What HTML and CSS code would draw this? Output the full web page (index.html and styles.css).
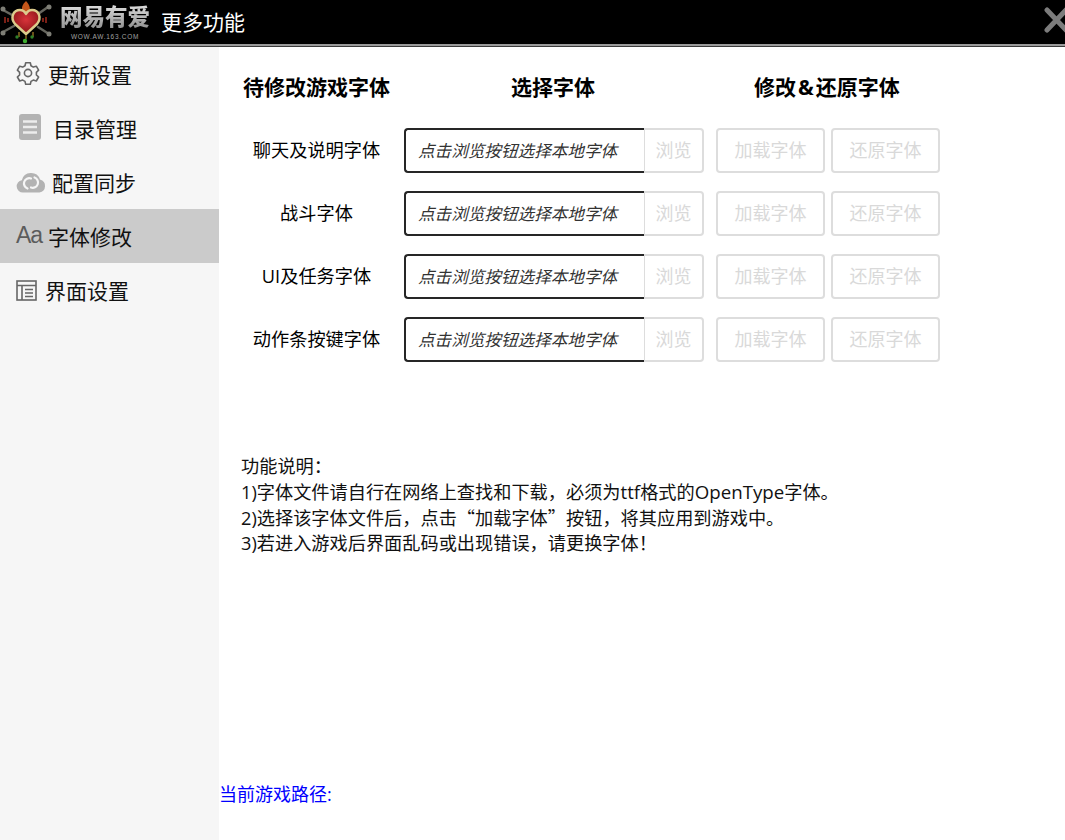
FILE: index.html
```html
<!DOCTYPE html>
<html lang="zh">
<head>
<meta charset="utf-8">
<title>更多功能</title>
<link rel="stylesheet" href="styles.css">
</head>
<body>
<header class="titlebar">
  <svg class="logo" width="52" height="44" viewBox="0 0 52 44">
    <defs>
      <radialGradient id="heart" cx="50%" cy="40%" r="60%"><stop offset="0" stop-color="#d8343a"/><stop offset="1" stop-color="#8c1418"/></radialGradient>
    </defs>
    <g stroke="#66665e" stroke-width="2.500" stroke-linecap="round">
      <path d="M3 32 L14 26"/><path d="M48 7 L38 14"/><path d="M3 10 L14 16"/><path d="M49 34 L38 27"/>
    </g>
    <g fill="#7e7e76"><circle cx="3" cy="9" r="2.500"/><circle cx="49" cy="7" r="2.500"/><circle cx="3" cy="33" r="2.500"/><circle cx="49" cy="34" r="2.500"/></g>
    <path d="M5 17v6M8 18v4M46 17v6M43 18v4" stroke="#a32a1e" stroke-width="1.500"/>
    <path d="M26 1c-4 4-5 7-3 11h6c2-4 0-8-3-11z" fill="#c4561a"/>
    <path d="M26 34 L15 24 C10 18 13 10 20 10 C23 10 25 12 26 14 C27 12 29 10 32 10 C39 10 42 18 37 24 Z" fill="url(#heart)" stroke="#dccb8c" stroke-width="2.400" stroke-linejoin="round"/>
    <path d="M19 32v5M33 32v5M26 35v4" stroke="#8a6a20" stroke-width="1.500"/>
    <circle cx="25" cy="41" r="2.200" fill="#3fae30"/><circle cx="17" cy="37" r="1.700" fill="#2e8028"/><circle cx="32" cy="37" r="1.700" fill="#2e8028"/>
  </svg>
  <div class="brand">
    <span class="brand-name">网易有爱</span>
    <span class="brand-url">WOW.AW.163.COM</span>
  </div>
  <span class="title">更多功能</span>
  <svg class="close" width="24" height="26" viewBox="0 0 24 26"><path d="M3 3 L22 23 M22 3 L3 23" stroke="#7c7c7c" stroke-width="5" stroke-linecap="round"/></svg>
</header>
<div class="main">
  <nav class="sidebar">
    <a class="nav-item nav-gear">
      <svg class="nav-icon" width="24" height="24" viewBox="0 0 24 24" fill="none" stroke="#666" stroke-width="1.600"><path d="M9.700 1.800h4.600l.7 3 2.300 1.300 3-.9 2.300 4-2.200 2.100v2.600l2.200 2.100-2.300 4-3-.9-2.300 1.300-.7 3H9.700l-.7-3-2.300-1.300-3 .9-2.300-4 2.200-2.100v-2.600L1.400 9.200l2.300-4 3 .9L9 4.800z" stroke-linejoin="round"/><circle cx="12" cy="12" r="3.600"/></svg>
      <span>更新设置</span>
    </a>
    <a class="nav-item nav-list">
      <svg class="nav-icon" width="22" height="26" viewBox="0 0 22 26"><rect width="22" height="26" rx="3" fill="#b3b3b3"/><path d="M4 7.500h14M4 13h14M4 18.500h14" stroke="#ececec" stroke-width="2.400"/></svg>
      <span>目录管理</span>
    </a>
    <a class="nav-item nav-cloud">
      <svg class="nav-icon nav-icon-low" width="30" height="22" viewBox="0 0 30 22"><path d="M7 21.500a6.200 6.200 0 0 1-1.200-12.300 9.500 9.500 0 0 1 18.200-.8 6.700 6.700 0 0 1-.6 13.100z" fill="#b3b3b3"/><path d="M11.500 17.500a5.200 5.200 0 0 1 3.500-10M18.500 6.500a5.200 5.200 0 0 1-3.500 10" fill="none" stroke="#f6f6f6" stroke-width="2.200" stroke-linecap="round"/></svg>
      <span>配置同步</span>
    </a>
    <a class="nav-item nav-font is-active">
      <span class="font-icon">Aa</span>
      <span>字体修改</span>
    </a>
    <a class="nav-item nav-layout">
      <svg class="nav-icon nav-icon-low" width="21" height="21" viewBox="0 0 21 21" fill="none" stroke="#666" stroke-width="1.600"><rect x="1" y="1" width="19" height="19"/><path d="M1 5.500h19M6 5.500v14.500M9 9.500h8M9 13h8M9 16.500h8"/></svg>
      <span>界面设置</span>
    </a>
  </nav>
  <main class="content">
    <div class="grid">
      <h2 class="head">待修改游戏字体</h2>
      <h2 class="head head-pick">选择字体</h2>
      <h2 class="head head-act">修改<span class="amp">&amp;</span>还原字体</h2>

      <div class="label">聊天及说明字体</div>
      <div class="picker"><div class="field">点击浏览按钮选择本地字体</div><button class="btn browse">浏览</button></div>
      <div class="actions"><button class="btn act">加载字体</button><button class="btn act">还原字体</button></div>

      <div class="label">战斗字体</div>
      <div class="picker"><div class="field">点击浏览按钮选择本地字体</div><button class="btn browse">浏览</button></div>
      <div class="actions"><button class="btn act">加载字体</button><button class="btn act">还原字体</button></div>

      <div class="label">UI及任务字体</div>
      <div class="picker"><div class="field">点击浏览按钮选择本地字体</div><button class="btn browse">浏览</button></div>
      <div class="actions"><button class="btn act">加载字体</button><button class="btn act">还原字体</button></div>

      <div class="label">动作条按键字体</div>
      <div class="picker"><div class="field">点击浏览按钮选择本地字体</div><button class="btn browse">浏览</button></div>
      <div class="actions"><button class="btn act">加载字体</button><button class="btn act">还原字体</button></div>
    </div>
    <div class="notes">
      <p>功能说明：</p>
      <p>1)字体文件请自行在网络上查找和下载，必须为<span class="latin">ttf</span>格式的<span class="latin">OpenType</span>字体。</p>
      <p>2)选择该字体文件后，点击<span class="cjk">“</span>加载字体<span class="cjk">”</span>按钮，将其应用到游戏中。</p>
      <p>3)若进入游戏后界面乱码或出现错误，请更换字体！</p>
    </div>
    <div class="path">当前游戏路径:</div>
  </main>
</div>
</body>
</html>
```
FILE: styles.css
```css
* { box-sizing: border-box; }
html, body { margin: 0; height: 100%; overflow: hidden; }
body {
  width: 1065px;
  height: 840px;
  display: flex;
  flex-direction: column;
  background: #fff;
  color: #000;
  font-family: "Open Sans", "Noto Sans CJK SC", sans-serif;
  font-size: 18px;
}
.titlebar {
  flex: none;
  height: 47px;
  display: flex;
  align-items: flex-start;
  background: #000;
  position: relative;
  border-bottom: 1px solid #3a3a3a;
  box-shadow: inset 0 -2px 0 #9a9a9a;
}
.logo { flex: none; }
.brand { display: flex; flex-direction: column; align-items: center; margin-left: 6px; width: 94px; }
.brand-name {
  font-size: 22.500px;
  line-height: 26px;
  margin-top: 4px;
  font-weight: 900;
  background: linear-gradient(#e0e0e0, #8c8c8c);
  -webkit-background-clip: text;
  background-clip: text;
  color: transparent;
}
.brand-url { font-size: 6.500px; line-height: 7px; margin-top: 3px; color: #a0a0a0; letter-spacing: .7px; font-family: "Liberation Sans", sans-serif; }
.title { margin-left: 9px; margin-top: 6px; color: #fff; font-size: 21px; line-height: 32px; }
.close { position: absolute; right: -3px; top: 7px; }
.main { flex: 1; display: flex; min-height: 0; }
.sidebar { flex: none; width: 219px; background: #f6f6f6; display: flex; flex-direction: column; }
.nav-item { height: 54px; display: flex; align-items: center; padding-left: 16px; font-size: 21px; color: #111; }
.nav-item.is-active { background: #cbcbcb; }
.nav-gear { gap: 8px; }
.nav-list { gap: 12px; padding-left: 19px; }
.nav-cloud { gap: 6px; }
.nav-font { gap: 7px; }
.nav-layout { gap: 8px; }
.nav-icon { flex: none; margin-top: -2px; }
.nav-icon-low { margin-top: 0; }
.font-icon { font-family: "Liberation Sans", sans-serif; font-size: 23px; color: #5c5c5c; margin-top: -2px; letter-spacing: -1px; width: 25px; }
.content { flex: 1; position: relative; min-width: 0; }
.grid {
  display: grid;
  grid-template-columns: 161px 300px 237px;
  grid-auto-rows: 45px;
  row-gap: 18px;
  margin-left: 24px;
  margin-top: 18px;
}
.head { margin: 0; font-size: 21px; font-weight: 700; line-height: 45px; white-space: nowrap; }
.head-pick { padding-left: 107px; }
.head-act { padding-left: 50px; }
.amp { padding: 0 2px; }
.label { text-align: center; width: 147px; line-height: 45px; font-size: 18.200px; white-space: nowrap; }
.picker { display: flex; height: 45px; }
.field {
  width: 240px;
  height: 45px;
  border: 2px solid #262626;
  border-right: 0;
  border-radius: 4px 0 0 4px;
  padding-left: 12px;
  line-height: 41px;
  font-size: 16.600px;
  font-style: italic;
  color: #333;
  white-space: nowrap;
}
.btn {
  background: #fff;
  border: 2px solid #dddddd;
  border-radius: 4px;
  color: #d9d9d9;
  font: inherit;
  font-size: 18px;
  padding: 0 0 4px;
  height: 45px;
}
.browse { width: 60px; border-radius: 0 4px 4px 0; border-left-width: 1px; }
.actions { display: flex; gap: 6px; margin-left: 12px; }
.act { width: 109px; }
.notes { margin: 92px 0 0 22px; font-size: 18.200px; line-height: 25px; color: #111; }
.notes p { margin: 0; }
.latin { font-size: 18.700px; }
.cjk { font-family: "Noto Sans CJK SC", sans-serif; }
.path { position: absolute; left: 0; top: 735px; color: #0000ff; font-size: 18px; line-height: 24px; }
```
